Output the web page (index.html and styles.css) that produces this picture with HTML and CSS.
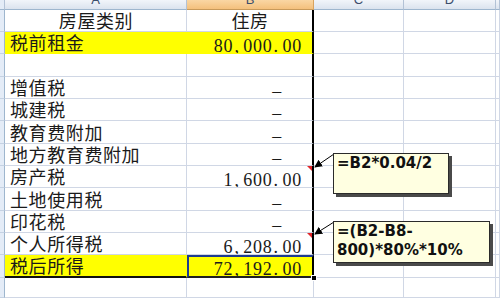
FILE: index.html
```html
<!DOCTYPE html>
<html lang="zh">
<head>
<meta charset="utf-8">
<title>税后所得</title>
<link rel="stylesheet" href="styles.css">
</head>
<body>
<div class="sheet">
  <div class="grid">
    <div class="c ch corner"></div>
    <div class="c ch"><span>A</span></div>
    <div class="c ch sel"><span>B</span></div>
    <div class="c ch"><span>C</span></div>
    <div class="c ch"><span>D</span></div>
    <div class="c ch"></div>

    <div class="c rh"></div>
    <div class="c t ctr">房屋类别</div>
    <div class="c t ctr bk">住房</div>
    <div class="c"></div><div class="c"></div><div class="c"></div>

    <div class="c rh"></div>
    <div class="c t y">税前租金</div>
    <div class="c n y bk">80<span class="pt">,</span>000<span class="pt">.</span>00</div>
    <div class="c"></div><div class="c"></div><div class="c"></div>

    <div class="c rh"></div>
    <div class="c t"></div>
    <div class="c n bk"></div>
    <div class="c"></div><div class="c"></div><div class="c"></div>

    <div class="c rh"></div>
    <div class="c t">增值税</div>
    <div class="c n dash bk">–</div>
    <div class="c"></div><div class="c"></div><div class="c"></div>

    <div class="c rh"></div>
    <div class="c t">城建税</div>
    <div class="c n dash bk">–</div>
    <div class="c"></div><div class="c"></div><div class="c"></div>

    <div class="c rh"></div>
    <div class="c t">教育费附加</div>
    <div class="c n dash bk">–</div>
    <div class="c"></div><div class="c"></div><div class="c"></div>

    <div class="c rh"></div>
    <div class="c t">地方教育费附加</div>
    <div class="c n dash bk">–</div>
    <div class="c"></div><div class="c"></div><div class="c"></div>

    <div class="c rh"></div>
    <div class="c t">房产税</div>
    <div class="c n bk note">1<span class="pt">,</span>600<span class="pt">.</span>00</div>
    <div class="c"></div><div class="c"></div><div class="c"></div>

    <div class="c rh"></div>
    <div class="c t">土地使用税</div>
    <div class="c n dash bk">–</div>
    <div class="c"></div><div class="c"></div><div class="c"></div>

    <div class="c rh"></div>
    <div class="c t">印花税</div>
    <div class="c n dash bk">–</div>
    <div class="c"></div><div class="c"></div><div class="c"></div>

    <div class="c rh"></div>
    <div class="c t">个人所得税</div>
    <div class="c n bk note">6<span class="pt">,</span>208<span class="pt">.</span>00</div>
    <div class="c"></div><div class="c"></div><div class="c"></div>

    <div class="c rh"></div>
    <div class="c t y last">税后所得</div>
    <div class="c n y active">72<span class="pt">,</span>192<span class="pt">.</span>00</div>
    <div class="c"></div><div class="c"></div><div class="c"></div>

    <div class="c rh"></div>
    <div class="c"></div>
    <div class="c"></div>
    <div class="c"></div><div class="c"></div><div class="c"></div>
  </div>

  <div class="handle"></div>

  <svg class="arrows" width="500" height="298" viewBox="0 0 500 298">
    <defs>
      <marker id="ah" markerWidth="8" markerHeight="8" refX="7" refY="4" orient="auto" markerUnits="userSpaceOnUse">
        <path d="M0 0 L8 4 L0 8 Z" fill="#000"/>
      </marker>
    </defs>
    <line x1="334" y1="154" x2="315" y2="167" stroke="#000" stroke-width="1" marker-end="url(#ah)"/>
    <line x1="334" y1="222" x2="315" y2="234" stroke="#000" stroke-width="1" marker-end="url(#ah)"/>
  </svg>

  <div class="comment c1">=B2*0.04/2</div>
  <div class="comment c2">=(B2-B8-<br>800)*80%*10%</div>
</div>
</body>
</html>
```

FILE: styles.css
```css
* {
  box-sizing: border-box;
  margin: 0;
  padding: 0;
}

body {
  margin: 0;
  width: 500px;
  height: 298px;
  overflow: hidden;
  background: #fff;
  font-family: "Noto Sans CJK SC", sans-serif;
}

.sheet {
  position: relative;
  width: 500px;
  height: 298px;
  overflow: hidden;
}

.grid {
  display: grid;
  grid-template-columns: 5px 182px 127px 90px 92px 4px;
  grid-template-rows: 10px 22px 22px 23px 22px 22px 23px 22px 22px 23px 22px 22px 23px 20px;
}

.c {
  display: flex;
  align-items: flex-end;
  overflow: hidden;
  white-space: nowrap;
  border-right: 1px solid #d0d7e5;
  border-bottom: 1px solid #d0d7e5;
}

.rh {
  background: #e4ecf7;
  border-right: 1px solid #9eb6ce;
  border-bottom: 1px solid #c5d2e3;
}

.ch {
  display: block;
  text-align: center;
  background: linear-gradient(#f2f5fa, #dbe3ee);
  border-right: 1px solid #b3c2d6;
  border-bottom: 1px solid #9eb6ce;
  font: 13px/14px "Liberation Sans", sans-serif;
  color: #3b4d6c;
}

.ch span {
  display: block;
  margin-top: -7px;
}

.ch.sel {
  background: linear-gradient(#fad7a4, #f4c07c);
  border-right-color: #d9a35e;
  border-bottom-color: #c89a5a;
}

.ch.corner {
  background: #e4ecf7;
}

.t {
  padding-left: 5px;
  font-size: 18px;
  line-height: 21px;
  letter-spacing: 0.6px;
  color: #1a1a1a;
}

.ctr {
  justify-content: center;
  padding-left: 1px;
}

.n {
  justify-content: flex-end;
  padding-right: 10px;
  font-family: "Liberation Serif", serif;
  font-size: 18px;
  line-height: 14px;
  letter-spacing: 0.8px;
  color: #1a1a1a;
}

.n .pt {
  display: inline-block;
  width: 9.8px;
  letter-spacing: 0;
  padding-left: 1px;
}

.n.dash {
  padding-right: 30px;
}

.y {
  background: #ffff00;
  border-right-color: #ffff00;
  border-bottom-color: #ffff00;
}

.bk {
  border-right: 2px solid #000;
}

.y.bk {
  border-right-color: #000;
}

.last {
  border-bottom: 2px solid #111;
}

.active {
  border-top: 2px solid #1f3b8f;
  border-left: 2px solid #1f3b8f;
  border-right: 2px solid #000;
  border-bottom: 2px solid #222;
}

.note {
  position: relative;
}

.note::after {
  content: "";
  position: absolute;
  top: 0;
  right: 0;
  border-top: 5px solid #e0262a;
  border-left: 5px solid transparent;
}

.handle {
  position: absolute;
  left: 311px;
  top: 275px;
  width: 6px;
  height: 6px;
  background: #000;
  border: 1px solid #fff;
}

.arrows {
  position: absolute;
  left: 0;
  top: 0;
  pointer-events: none;
}

.comment {
  position: absolute;
  left: 333px;
  padding: 0 3px;
  background: #ffffe1;
  border: 1px solid #2b2b2b;
  box-shadow: 3px 3px 0 #4a4a4a;
  font-family: "DejaVu Sans", sans-serif;
  font-weight: bold;
  font-size: 15px;
  line-height: 19px;
  color: #111;
  white-space: nowrap;
}

.c1 {
  top: 153px;
  width: 116px;
  height: 41px;
}

.c2 {
  top: 221px;
  width: 157px;
  height: 42px;
}
```
